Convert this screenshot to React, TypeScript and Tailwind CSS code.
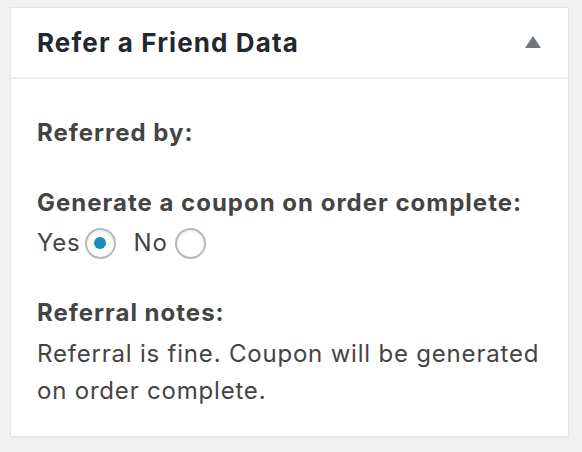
import React from 'react'

function Radio({ checked }: { checked?: boolean }) {
  return (
    <span className="inline-flex h-[31px] w-[31px] items-center justify-center rounded-full border-2 border-[#b4b9be] bg-white shadow-[inset_0_2px_3px_rgba(0,0,0,0.08)]">
      {checked && <span className="h-[12px] w-[12px] rounded-full bg-[#1e8cbe]" />}
    </span>
  )
}

export default function App() {
  return (
    <div className="min-h-[452px] bg-[#f1f1f1] pl-[10px] pr-[13px] pt-[7px] font-['Inter',sans-serif]">
      <div className="border border-[#e5e5e5] bg-white shadow-[0_1px_1px_rgba(0,0,0,0.04)]">
        <div className="flex h-[71px] items-center justify-between border-b-2 border-[#eeeeee] pl-[26px] pr-[27px]">
          <h2 className="text-[26px] font-bold leading-[36px] tracking-[1.1px] text-[#23282d]">Refer a Friend Data</h2>
          <svg width="16" height="12" viewBox="0 0 16 12" className="mb-[2px]">
            <path d="M8 0 L16 12 L0 12 Z" fill="#72777c" />
          </svg>
        </div>
        <div className="px-[26px] pb-[27px] pt-[36px] text-[24px] leading-[36px] tracking-[0.8px] text-[#444]">
          <p className="font-bold tracking-[1px]">Referred by:</p>
          <p className="mt-[34px] font-bold tracking-[1px]">Generate a coupon on order complete:</p>
          <div className="mt-[4px] flex h-[36px] items-center">
            <span>Yes</span>
            <span className="ml-[4px] flex"><Radio checked /></span>
            <span className="ml-[18px]">No</span>
            <span className="ml-[7px] flex"><Radio /></span>
          </div>
          <p className="mt-[34px] font-bold tracking-[1px]">Referral notes:</p>
          <p className="mt-[4px] leading-[37px]">
            Referral is fine. Coupon will be generated on order complete.
          </p>
        </div>
      </div>
    </div>
  )
}
